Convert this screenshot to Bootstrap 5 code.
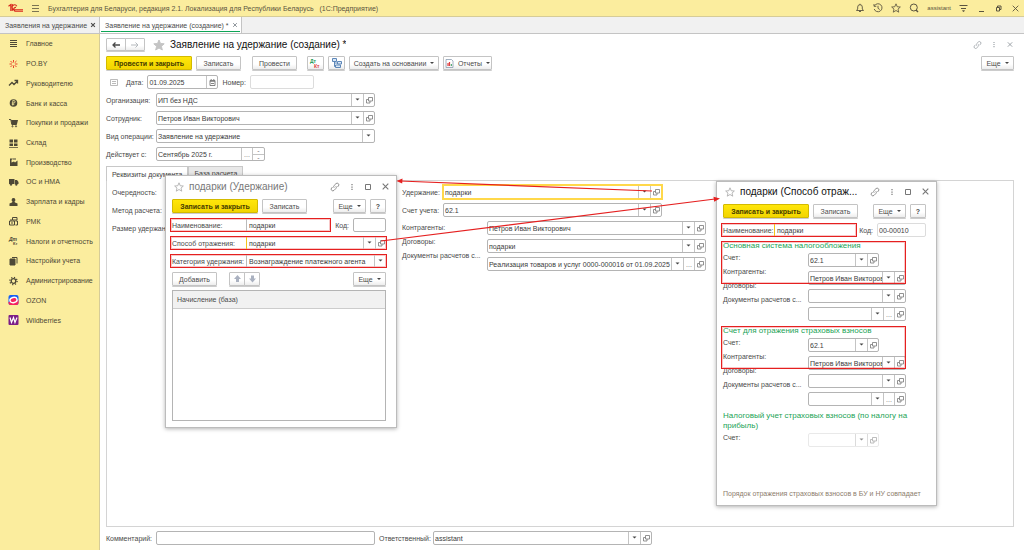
<!DOCTYPE html>
<html lang="ru">
<head>
<meta charset="utf-8">
<meta name="viewport" content="width=device-width, initial-scale=1">
<title>Заявление на удержание (создание)</title>
<link href="https://cdn.jsdelivr.net/npm/bootstrap@5.3.0/dist/css/bootstrap.min.css" rel="stylesheet">
<style>
  body { font: 7px/9px "Liberation Sans", Arial, sans-serif; color: #4a4a4a; background: #fff; }
  a { color: inherit; text-decoration: none; }
  svg { display: block; flex: none; fill: none; stroke: currentColor; }
  .topbar { height: 17px; background: #fbed9e; border-bottom: 1px solid #d6cc98; color: #5a5440; }
  .doc-tabs { height: 17px; background: #f1f1f1; border-bottom: 1px solid #c4c4c4; }
  .doc-tab { border-right: 1px solid #c4c4c4; padding: 0 3px 0 5px; gap: 3px; }
  .doc-tab.current { background: #fff; position: relative; }
  .doc-tab.current::after { content: ""; position: absolute; left: 1px; right: 1px; bottom: 1px; height: 1px; background: #0ea556; }
  .plain { border: 0; background: none; padding: 0; color: inherit; line-height: 9px; }
  .side { width: 100px; flex: none; background: #fbed9e; border-right: 1px solid #d6cc98; }
  .side ul { display: grid; grid-auto-rows: 1fr; height: 296px; }
  .side a { display: flex; align-items: center; height: 100%; padding-left: 8px; gap: 7px; color: #4d4836; }
  .side svg { width: 11px; height: 10px; }
  .work { min-width: 0; padding: 4px 10px 5px 6px; }
  .toolbar { margin-top: 5px; }
  .btn { --bs-btn-padding-x: 0; --bs-btn-padding-y: 0; --bs-btn-font-size: 7px; --bs-btn-line-height: 9px; --bs-btn-border-radius: 1px;
    --bs-btn-color: #4a4a4a; --bs-btn-border-color: #c4c4c4; height: 14px; display: inline-flex; align-items: center; justify-content: center; gap: 4px;
    background: linear-gradient(#fff 60%, #ededed); box-shadow: 0 1px 0 #ccc; flex: none; white-space: nowrap; }
  .btn-main { --bs-btn-border-color: #d3ba00; --bs-btn-color: #453c00; font-weight: bold; width: 86px; background: linear-gradient(#ffe60a, #f2d500); }
  .w16 { width: 16px; } .w17 { width: 17px; } .w33 { width: 33px; } .w45 { width: 45px; } .w90 { width: 90px; } .w49 { width: 49px; }
  .post { margin: 0 10px 0 11px; }
  .caret::after { content: ""; border: 2px solid transparent; border-top-color: #444; border-bottom: 0; }
  h1, h2 { font-size: 10px; line-height: 13px; margin: 0; color: #111; font-weight: normal; white-space: nowrap; overflow: hidden; text-overflow: ellipsis; }
  .fld { display: flex; height: 14px; border: 1px solid #b4b4b4; border-radius: 2px; background: #fff; overflow: hidden; color: #3c3c3c; min-width: 0; }
  .fld input, .fld select { flex: 1 1 0; min-width: 0; width: 0; border: 0; border-radius: 0; outline: 0; padding: 1px 1px 0; background-color: transparent; color: inherit; font: inherit; line-height: 11px; appearance: none; }
  .fld select { padding-right: 12px; text-overflow: clip; background: url("data:image/svg+xml,%3Csvg xmlns='http://www.w3.org/2000/svg' width='12' height='14'%3E%3Cpath d='M.5 0v14' stroke='%23c4c4c4'/%3E%3Cpath d='M4.500 5.500h4l-2 2z' fill='%23444'/%3E%3C/svg%3E") right center no-repeat; }
  .fld button { width: 11px; flex: none; border: 0; border-left: 1px solid #c4c4c4; background: none; padding: 0; color: #777; display: flex; align-items: center; justify-content: center; line-height: 9px; }
  .fld.faint { border-color: #dcdcdc; }
  .fld.off { border-color: #dcdcdc; opacity: .6; }
  .fld.focus { border: 2px solid #ffd84a; height: 16px; border-radius: 0; margin: -1px 0 -1px -1px; width: 221px; }
  .fld .step { display: flex; flex-direction: column; width: 12px; border-left: 1px solid #c4c4c4; }
  .fld .step button { width: auto; flex: 1; border-left: 0; line-height: 5px; }
  .fld .step button + button { border-top: 1px solid #c4c4c4; }
  .form-line { display: flex; align-items: center; height: 14px; margin-bottom: 4px; }
  .form-line > label { flex: none; white-space: nowrap; }
  .date-line { margin-top: 5px; }
  .lab50 { width: 50px; } .lab41 { width: 41px; } .lab54 { width: 54px; }
  .f219 { width: 219px; } .f109 { width: 109px; } .f71 { width: 71px; } .f64 { width: 64px; }
  .page-tabs { margin-top: 1px; height: 14px; }
  .page-tab { border: 1px solid #c8c8c8; border-bottom: 0; padding: 0 5px; background: #e8e8e8; color: #444; }
  .page-tab.current { background: #fff; height: 15px; position: relative; }
  .sheet { border: 1px solid #d4d4d4; padding: 4px 5px; }
  .left-part { width: 285px; margin-right: 5px; flex: none; }
  .left-part label { width: 70px; }
  .labels label { display: block; height: 14px; white-space: nowrap; }
  .sheet .labels { padding-top: 2px; }
  .win { position: absolute; background: #fff; border: 1px solid #bcbcbc; box-shadow: 0 1px 4px rgba(0,0,0,.3); padding: 4px 10px 6px 6px; }
  .win-deduct { left: 165px; top: 175px; width: 232px; height: 253px; }
  .win-method { left: 716px; top: 181px; width: 221px; height: 325px; padding-top: 3px; padding-bottom: 7px; }
  .win-deduct h2 { color: #777; }
  .win-head { margin-bottom: 6px; color: #777; }
  .win-head > svg { margin: 0 5px 0 2px; color: #aaa; }
  .win-icons { display: flex; align-items: center; gap: 8px; margin-left: auto; }
  .win-head .win-icons { gap: 9px; margin-right: -4px; }
  .win-cmd { display: flex; gap: 4px; margin-bottom: 5px; }
  .hot { border: 1px solid #e52020; box-shadow: inset 0 0 0 1px rgba(229,32,32,.25); display: flex; height: 14px; align-items: center; background: #fff; margin: 0 -1px 4px -2px; }
  .hot > label { flex: none; white-space: nowrap; padding-left: 1px; }
  .hot .fld { border: 0; border-left: 1px solid #bbb; border-radius: 0; height: 12px; flex: 1; background: none; }
  .hot .fld input, .hot .fld select { padding-left: 2px; }
  .hot .fld.accent { border-left-color: #f5c51a; }
  .hot .lab75 { width: 75px; } .hot .lab52 { width: 52px; }
  .base-list { margin: 0; border: 1px solid #b4b4b4; }
  .base-list th { background: #f1f1f1; border-bottom: 1px solid #ccc; height: 17px; padding: 0 4px; font-weight: normal; vertical-align: middle; }
  .group-title { font-size: 8px; line-height: 10px; color: #22a356; margin: 0; font-weight: normal; padding-bottom: 2px; }
  .group { position: relative; height: 85px; flex: none; }
  .group-fields { width: 98px; display: grid; gap: 4px; }
  .group .labels { width: 85px; }
  .frame { position: absolute; left: -2px; top: 0; width: 185px; height: 43px; border: 1px solid #e52020; box-shadow: inset 0 0 0 1px rgba(229,32,32,.25); pointer-events: none; }
  .note { color: #8c7c6c; }
  .links { position: absolute; left: 0; top: 0; width: 1024px; height: 550px; pointer-events: none; }
</style>
</head>
<body>
<svg class="d-none" aria-hidden="true">
  <symbol id="open" viewBox="0 0 7 7"><path d="M2.500 .5h4v3.500h-4zM2.500 2.500h-2v3.500h3.500v-2" stroke-width=".8"/></symbol>
  <symbol id="link" viewBox="0 0 10 10"><path d="M4.200 5.800a1.700 1.700 0 0 1 0-2.400l1.800-1.800a1.700 1.700 0 0 1 2.400 2.400l-1 1M5.800 4.200a1.700 1.700 0 0 1 0 2.400l-1.800 1.800a1.700 1.700 0 0 1-2.400-2.400l1-1" stroke-width=".8"/></symbol>
  <symbol id="dots" viewBox="0 0 4 8"><path d="M2 1v1.300M2 3.400v1.300M2 5.800v1.300" stroke-width="1.200"/></symbol>
  <symbol id="cross" viewBox="0 0 8 8"><path d="M1.500 1.500l5 5M6.500 1.500l-5 5"/></symbol>
  <symbol id="box" viewBox="0 0 8 8"><path d="M1.500 1.500h5v5h-5z"/></symbol>
  <symbol id="star" viewBox="0 0 12 12"><path d="M6 1l1.500 3.500 3.700.3-2.800 2.500.9 3.700L6 9l-3.300 2 .9-3.700L.8 4.800l3.700-.3z"/></symbol>
</svg>

<div class="position-relative d-flex flex-column min-vh-100">
<header class="topbar d-flex align-items-center">
  <svg class="ms-2" width="15" height="10" viewBox="0 0 15 10" style="color:#d9261c"><path d="M.5 3.200L2.800 1.500V8M4.200 1v7M8.800 3.200A2.500 2.500 0 1 0 7.300 6.700H15M8 4.400A1 1 0 1 0 7.300 8.200H15" stroke-width="1.100"/></svg>
  <button class="plain ms-1 ps-1" aria-label="Меню"><svg width="9" height="9" viewBox="0 0 9 9"><path d="M1 1.500h7M1 4.500h7M1 7.500h7" stroke-width=".8"/></svg></button>
  <span class="ps-2">Бухгалтерия для Беларуси, редакция 2.1. Локализация для Республики Беларусь &nbsp; (1С:Предприятие)</span>
  <div class="ms-auto d-flex align-items-center gap-2 pe-1">
    <button class="plain" aria-label="Уведомления"><svg width="10" height="10" viewBox="0 0 10 10"><path d="M1.500 7.500h7L7.300 6V4A2.300 2.300 0 0 0 2.700 4v2zM5 .8v1M4 8.500h2" stroke-width=".9"/></svg></button>
    <button class="plain" aria-label="История"><svg width="10" height="10" viewBox="0 0 10 10"><path d="M1.500 2.800A4 4 0 1 1 1.200 6M1 1v2.300h2.300M5 2.800V5.300L6.700 6.500" stroke-width=".9"/></svg></button>
    <button class="plain" aria-label="Избранное"><svg width="10" height="10"><use href="#star"/></svg></button>
    <button class="plain" aria-label="Поиск"><svg width="10" height="10" viewBox="0 0 10 10"><circle cx="4.800" cy="4.500" r="3.500"/><path d="M7 7l2 2" stroke-width="1.500"/></svg></button>
    <span style="font-size:6px">assistant</span>
    <button class="plain" aria-label="Настройки"><svg width="9" height="9" viewBox="0 0 9 9"><path d="M.5 1.500h8M2 4.500h5"/><path d="M3.500 6.500h2l-1 1.500z" fill="currentColor" stroke-width=".5"/></svg></button>
    <button class="plain" aria-label="Свернуть"><svg width="10" height="9" viewBox="0 0 10 9"><path d="M3 7.500h5"/></svg></button>
    <button class="plain" aria-label="Окно"><svg width="9" height="9" viewBox="0 0 9 9"><path d="M2.500 3.500h3v3.500h-3zM3.500 3.500V2H7v3.500H5.500"/></svg></button>
    <button class="plain" aria-label="Закрыть"><svg width="9" height="9" stroke-width=".8"><use href="#cross"/></svg></button>
  </div>
</header>

<nav class="doc-tabs d-flex">
  <div class="doc-tab d-flex align-items-center"><a href="#">Заявления на удержание</a><button class="plain" aria-label="Закрыть вкладку"><svg width="6" height="6" stroke-width="1.500"><use href="#cross"/></svg></button></div>
  <div class="doc-tab current d-flex align-items-center"><a href="#">Заявление на удержание (создание) *</a><button class="plain text-secondary" aria-label="Закрыть вкладку"><svg width="6" height="6"><use href="#cross"/></svg></button></div>
</nav>

<div class="d-flex flex-grow-1">
<nav class="side">
  <ul class="list-unstyled m-0">
    <li><a href="#"><svg viewBox="0 0 11 10"><path d="M2 1.500h7M2 3.500h7M2 5.500h7M2 7.500h7" /></svg>Главное</a></li>
    <li><a href="#"><svg viewBox="0 0 11 10" style="color:#e8452c"><path d="M5.500 3.500V1M5.500 6.500V9M4 5H1.500M7 5h2.500M4.300 3.800L2.500 2M6.700 3.800L8.500 2M4.300 6.200L2.500 8M6.700 6.200L8.500 8"/></svg>PO.BY</a></li>
    <li><a href="#"><svg viewBox="0 0 11 10"><path d="M1 7.500L4 4.500l2 2 3-3M6.500 2.500h3v3" stroke-width="1.300"/></svg>Руководителю</a></li>
    <li><a href="#"><svg viewBox="0 0 11 10"><circle cx="5.500" cy="5" r="3.800" fill="currentColor" stroke="none"/><path d="M4.800 7.500v-5h1a1.200 1.200 0 0 1 0 2.500H3.800M3.800 6.300h2.500" stroke="#fbed9e" stroke-width=".8"/></svg>Банк и касса</a></li>
    <li><a href="#"><svg viewBox="0 0 11 10"><path d="M1 1.500h1.800l1 5h5"/><path d="M3 2h7L9 6H4z" fill="currentColor" stroke="none"/><circle cx="4.500" cy="8.300" r=".6"/><circle cx="8" cy="8.300" r=".6"/></svg>Покупки и продажи</a></li>
    <li><a href="#"><svg viewBox="0 0 11 10"><path d="M1.500 1.500h3.500v3h-3.500zM6 1.500h3.500v3H6zM1.500 5.500h3.500v2.500h-3.500zM6 5.500h3.500v2.500H6zM1 9h9v.7H1z" fill="currentColor" stroke="none"/></svg>Склад</a></li>
    <li><a href="#"><svg viewBox="0 0 11 10"><path d="M2 9V1.500h2.500L3.500 3v2.500L6 4.500l1 1 2.500-2V9z" fill="currentColor" stroke="none"/><path d="M4.500 2h3.500"/></svg>Производство</a></li>
    <li><a href="#"><svg viewBox="0 0 11 10"><path d="M1 2h5.500v5H1zM7 3h2l1.500 2v2H7z" fill="currentColor" stroke="none"/><circle cx="3" cy="7.500" r="1" fill="currentColor" stroke-width=".4"/><circle cx="8.300" cy="7.500" r="1" fill="currentColor" stroke-width=".4"/></svg>ОС и НМА</a></li>
    <li><a href="#"><svg viewBox="0 0 11 10"><path d="M5.500 1a1.900 1.900 0 0 1 1 3.500L7 5.500l2.500 1V9h-8V6.500l2.500-1 .5-1A1.900 1.900 0 0 1 5.500 1z" fill="currentColor" stroke="none"/></svg>Зарплата и кадры</a></li>
    <li><a href="#"><svg viewBox="0 0 11 10"><path d="M1.500 5h5v4h-5zM4.500 1.500h4.500v2.500h-4.500zM7.500 5H9.500v4H7.500M3 5V3M3 7h2"/></svg>РМК</a></li>
    <li><a href="#"><svg viewBox="0 0 11 10"><text x="1" y="5" font-size="5" font-style="italic" font-weight="bold" fill="currentColor" stroke="none">Дт</text><text x="5" y="9" font-size="4" font-weight="bold" fill="currentColor" stroke="none">Кт</text></svg>Налоги и отчетность</a></li>
    <li><a href="#"><svg viewBox="0 0 11 10"><path d="M2 3h5v6H2z" fill="currentColor"/><path d="M4 1.500h5v6"/></svg>Настройки учета</a></li>
    <li><a href="#"><svg viewBox="0 0 11 10"><circle cx="5.500" cy="5" r="2.300" stroke-width="1.300"/><circle cx="5.500" cy="5" r="3.600" stroke-dasharray="1.200 1.630" stroke-width="1.300"/></svg>Администрирование</a></li>
    <li><a href="#"><svg viewBox="0 0 11 10"><rect x=".5" width="10" height="10" rx="2" fill="#1660f5" stroke="none"/><path d="M.5 7L10.500 5v3q0 2-2 2h-6q-2 0-2-2z" fill="#f5235f" stroke="none"/><ellipse cx="5.500" cy="5" rx="3.600" ry="2.600" fill="#f5235f" stroke="#fff" stroke-width="1.400" transform="rotate(-15 5.500 5)"/></svg>OZON</a></li>
    <li><a href="#"><svg viewBox="0 0 11 10"><rect x=".5" width="10" height="10" rx="1" fill="#7b1d87" stroke="none"/><path d="M2 2.500l1.500 5 2-5 1.500 5 2-5" stroke="#fff" stroke-width="1.200"/></svg>Wildberries</a></li>
  </ul>
</nav>

<main class="work flex-grow-1 d-flex flex-column">
  <div class="d-flex align-items-center" style="height:13px">
    <div class="btn-group"><button class="btn" style="width:20px;height:13px" aria-label="Назад"><svg width="8" height="6" viewBox="0 0 8 6"><path d="M8 3H1M3.500.5L1 3l2.500 2.500" stroke-width="1.300"/></svg></button><button class="btn" style="width:20px;height:13px" aria-label="Вперед"><svg width="8" height="6" viewBox="0 0 8 6" class="text-secondary opacity-50"><path d="M0 3h7M4.500.5L7 3 4.500 5.500"/></svg></button></div>
    <svg class="ms-1 ps-1" width="17" height="12" style="fill:#c4c4c4;stroke:#c4c4c4"><use href="#star" width="12" height="12"/></svg>
    <h1 class="ps-1">Заявление на удержание (создание) *</h1>
    <div class="win-icons text-secondary opacity-75">
      <svg width="9" height="10"><use href="#link"/></svg><svg width="8" height="7"><use href="#dots"/></svg><svg width="8" height="7"><use href="#cross"/></svg>
    </div>
  </div>
  <div class="d-flex toolbar">
    <button class="btn btn-main">Провести и закрыть</button>
    <div class="d-flex ms-1">
      <button class="btn w45">Записать</button>
      <button class="btn w45 post">Провести</button>
      <button class="btn w17 me-1"><svg width="13" height="11" viewBox="0 0 13 11"><text x="1" y="5" font-size="5" font-weight="bold" fill="#1d9a55" stroke="none">Дт</text><text x="5" y="10" font-size="5" font-weight="bold" fill="#e04040" stroke="none">Кт</text></svg></button>
      <button class="btn w17 me-1" aria-label="Структура подчиненности"><svg width="10" height="10" viewBox="0 0 10 10" style="color:#5d87b8"><path d="M.5.5h4v3h-4zM5.500 3.500h4v2.500h-4zM3.500 7h5v2.500h-5zM2.500 3.500v5h1M2.500 5h3" fill="#dbe8f6"/></svg></button>
      <button class="btn caret w90 me-1">Создать на основании</button>
      <button class="btn caret w49"><svg width="9" height="9" viewBox="0 0 9 9"><path d="M1 .5h5.500L8 2v6.500H1z" stroke="#8a9cb0" stroke-width=".8"/><path d="M3 7V4M4.500 7V3" stroke="#e04040" stroke-width="1.200"/><path d="M6.300 7V5" stroke="#2c9b57"/></svg>Отчеты</button>
    </div>
    <button class="btn caret w33 ms-auto">Еще</button>
  </div>

  <div class="form-line date-line">
    <svg class="ms-1 me-2" width="8" height="7" viewBox="0 0 8 7" style="color:#aaa"><path d="M.5 .5h7v6h-7zM2 2.500h4M2 4.500h4" stroke-width=".8"/></svg>
    <label for="date" class="me-1">Дата:</label>
    <div class="fld f71"><input id="date" value="01.09.2025"><button aria-label="Календарь"><svg width="7" height="7" viewBox="0 0 7 7"><path d="M1 1.500h5v5H1zM1 2.300h5M2.200 0v1.500M4.800 0v1.500M2 4.500h3" stroke-width=".9"/></svg></button></div>
    <label for="num" class="ms-1 me-1">Номер:</label>
    <div class="fld faint f64"><input id="num"></div>
  </div>
  <div class="form-line"><label class="lab50" for="org">Организация:</label><div class="fld f219"><select id="org"><option>ИП без НДС</option></select><button aria-label="Открыть"><svg width="7" height="7"><use href="#open"/></svg></button></div></div>
  <div class="form-line"><label class="lab50" for="emp">Сотрудник:</label><div class="fld f219"><select id="emp"><option>Петров Иван Викторович</option></select><button aria-label="Открыть"><svg width="7" height="7"><use href="#open"/></svg></button></div></div>
  <div class="form-line"><label class="lab50" for="kind">Вид операции:</label><div class="fld f219"><select id="kind"><option>Заявление на удержание</option></select></div></div>
  <div class="form-line"><label class="lab50" for="from">Действует с:</label><div class="fld f109"><input id="from" value="Сентябрь 2025 г."><button aria-label="Выбрать">...</button><div class="step"><button>-</button><button>-</button></div></div></div>

  <div class="page-tabs d-flex">
    <button class="page-tab current">Реквизиты документа</button><button class="page-tab">База расчета</button>
  </div>
  <section class="sheet flex-grow-1 d-flex">
    <div class="left-part">
      <div class="form-line"><label for="q">Очередность:</label><div class="fld flex-grow-1"><input id="q"></div></div>
      <div class="form-line"><label for="m">Метод расчета:</label><div class="fld flex-grow-1"><input id="m"></div></div>
      <div class="form-line"><label>Размер удержания:</label></div>
    </div>
    <div style="width:304px">
      <div class="form-line"><label class="lab41" for="ded">Удержание:</label><div class="fld focus"><select id="ded"><option>подарки</option></select><button aria-label="Открыть"><svg width="7" height="7"><use href="#open"/></svg></button></div></div>
      <div class="form-line"><label class="lab41" for="acc">Счет учета:</label><div class="fld f219"><select id="acc"><option>62.1</option></select><button aria-label="Открыть"><svg width="7" height="7"><use href="#open"/></svg></button></div></div>
      <div class="d-flex justify-content-between">
        <div class="labels"><label for="k1">Контрагенты:</label><label for="d1">Договоры:</label><label for="r1">Документы расчетов с...</label></div>
        <div class="f219 d-grid gap-1">
          <div class="fld"><select id="k1"><option>Петров Иван Викторович</option></select><button aria-label="Открыть"><svg width="7" height="7"><use href="#open"/></svg></button></div>
          <div class="fld"><select id="d1"><option>подарки</option></select><button aria-label="Открыть"><svg width="7" height="7"><use href="#open"/></svg></button></div>
          <div class="fld"><select id="r1"><option>Реализация товаров и услуг 0000-000016 от 01.09.2025 12:00:00</option></select><button aria-label="Выбрать">...</button><button aria-label="Открыть"><svg width="7" height="7"><use href="#open"/></svg></button></div>
        </div>
      </div>
    </div>
  </section>
  <div class="form-line mt-1 mb-0">
    <label class="lab50" for="com">Комментарий:</label><div class="fld f219"><input id="com"></div>
    <label class="ms-1 lab54" for="resp">Ответственный:</label><div class="fld f219"><select id="resp"><option>assistant</option></select><button aria-label="Открыть"><svg width="7" height="7"><use href="#open"/></svg></button></div>
  </div>
</main>
</div>

<section class="win win-deduct d-flex flex-column">
  <div class="win-head d-flex align-items-center">
    <svg width="10" height="10"><use href="#star"/></svg><h2>подарки (Удержание)</h2>
    <div class="win-icons"><svg width="10" height="10"><use href="#link"/></svg><svg width="6" height="8"><use href="#dots"/></svg><svg width="8" height="8"><use href="#box"/></svg><svg width="9" height="9"><use href="#cross"/></svg></div>
  </div>
  <div class="win-cmd"><button class="btn btn-main">Записать и закрыть</button><button class="btn w45">Записать</button><button class="btn caret w33 ms-auto">Еще</button><button class="btn w16 fw-bold">?</button></div>
  <div class="d-flex align-items-center mb-1">
    <div class="hot mb-0" style="width:161px"><label class="lab75" for="n1">Наименование:</label><div class="fld"><input id="n1" value="подарки"></div></div>
    <label class="ms-auto me-1" for="c1">Код:</label><div class="fld w33"><input id="c1"></div>
  </div>
  <div class="hot"><label class="lab75" for="w1">Способ отражения:</label><div class="fld accent"><select id="w1"><option>подарки</option></select><button aria-label="Открыть"><svg width="7" height="7"><use href="#open"/></svg></button></div></div>
  <div class="hot"><label class="lab75" for="g1">Категория удержания:</label><div class="fld"><select id="g1"><option>Вознаграждение платежного агента</option></select></div></div>
  <div class="d-flex mb-1"><button class="btn w45">Добавить</button><div class="btn-group ms-2 ps-1"><button class="btn w16" aria-label="Вверх"><svg width="7" height="8" viewBox="0 0 7 8" style="fill:#aab1c0;stroke:none"><path d="M3.500 0L7 4H5v3H2V4H0z"/></svg></button><button class="btn w16" aria-label="Вниз"><svg width="7" height="8" viewBox="0 0 7 8" style="fill:#aab1c0;stroke:none"><path d="M3.500 7.500L7 3.500H5v-3H2v3H0z"/></svg></button></div><button class="btn caret w33 ms-auto">Еще</button></div>
  <div class="flex-grow-1 base-list"><table class="w-100"><thead><tr><th>Начисление (база)</th></tr></thead></table></div>
</section>

<section class="win win-method d-flex flex-column">
  <div class="win-head d-flex align-items-center">
    <svg width="10" height="10"><use href="#star"/></svg><h2>подарки (Способ отраж...</h2>
    <div class="win-icons"><svg width="10" height="10"><use href="#link"/></svg><svg width="6" height="8"><use href="#dots"/></svg><svg width="8" height="8"><use href="#box"/></svg><svg width="9" height="9"><use href="#cross"/></svg></div>
  </div>
  <div class="win-cmd"><button class="btn btn-main">Записать и закрыть</button><button class="btn w45">Записать</button><button class="btn caret w33 ms-auto">Еще</button><button class="btn w16 fw-bold">?</button></div>
  <div class="d-flex align-items-center mb-1">
    <div class="hot mb-0" style="width:136px"><label class="lab52" for="n2">Наименование:</label><div class="fld accent"><input id="n2" value="подарки"></div></div>
    <label class="ms-auto me-1" for="c2">Код:</label><div class="fld faint w49"><input id="c2" value="00-00010"></div>
  </div>
  <div class="group">
    <div class="frame"></div>
    <h3 class="group-title">Основная система налогообложения</h3>
    <div class="d-flex">
      <div class="labels"><label for="a2">Счет:</label><label for="k2">Контрагенты:</label><label for="d2">Договоры:</label><label for="r2">Документы расчетов с...</label></div>
      <div class="group-fields">
        <div class="fld f71"><select id="a2"><option>62.1</option></select><button aria-label="Открыть"><svg width="7" height="7"><use href="#open"/></svg></button></div>
        <div class="fld"><select id="k2"><option>Петров Иван Викторович</option></select><button aria-label="Открыть"><svg width="7" height="7"><use href="#open"/></svg></button></div>
        <div class="fld"><select id="d2"><option></option></select><button aria-label="Открыть"><svg width="7" height="7"><use href="#open"/></svg></button></div>
        <div class="fld"><select id="r2"><option></option></select><button aria-label="Выбрать">...</button><button aria-label="Открыть"><svg width="7" height="7"><use href="#open"/></svg></button></div>
      </div>
    </div>
  </div>
  <div class="group">
    <div class="frame"></div>
    <h3 class="group-title">Счет для отражения страховых взносов</h3>
    <div class="d-flex">
      <div class="labels"><label for="a3">Счет:</label><label for="k3">Контрагенты:</label><label for="d3">Договоры:</label><label for="r3">Документы расчетов с...</label></div>
      <div class="group-fields">
        <div class="fld f71"><select id="a3"><option>62.1</option></select><button aria-label="Открыть"><svg width="7" height="7"><use href="#open"/></svg></button></div>
        <div class="fld"><select id="k3"><option>Петров Иван Викторович</option></select><button aria-label="Открыть"><svg width="7" height="7"><use href="#open"/></svg></button></div>
        <div class="fld"><select id="d3"><option></option></select><button aria-label="Открыть"><svg width="7" height="7"><use href="#open"/></svg></button></div>
        <div class="fld"><select id="r3"><option></option></select><button aria-label="Выбрать">...</button><button aria-label="Открыть"><svg width="7" height="7"><use href="#open"/></svg></button></div>
      </div>
    </div>
  </div>
  <div>
    <h3 class="group-title">Налоговый учет страховых взносов (по налогу на прибыль)</h3>
    <div class="d-flex group h-auto">
      <div class="labels"><label for="a4">Счет:</label></div>
      <div class="fld off f71"><select id="a4" disabled><option></option></select><button disabled aria-label="Открыть"><svg width="7" height="7"><use href="#open"/></svg></button></div>
    </div>
  </div>
  <div class="note mt-auto">Порядок отражения страховых взносов в БУ и НУ совпадает</div>
</section>

<svg class="links" viewBox="0 0 1024 550" style="color:#e52020"><path d="M652 191L400 181M381 241L715 199" stroke-width="1.200"/><path d="M396.500 181l6-2.500-.3 5zM720 198.500l-6.500-1.800.7 5z" fill="currentColor" stroke="none"/></svg>
</div>
<script src="https://cdn.jsdelivr.net/npm/bootstrap@5.3.0/dist/js/bootstrap.bundle.min.js"></script>
</body>
</html>
